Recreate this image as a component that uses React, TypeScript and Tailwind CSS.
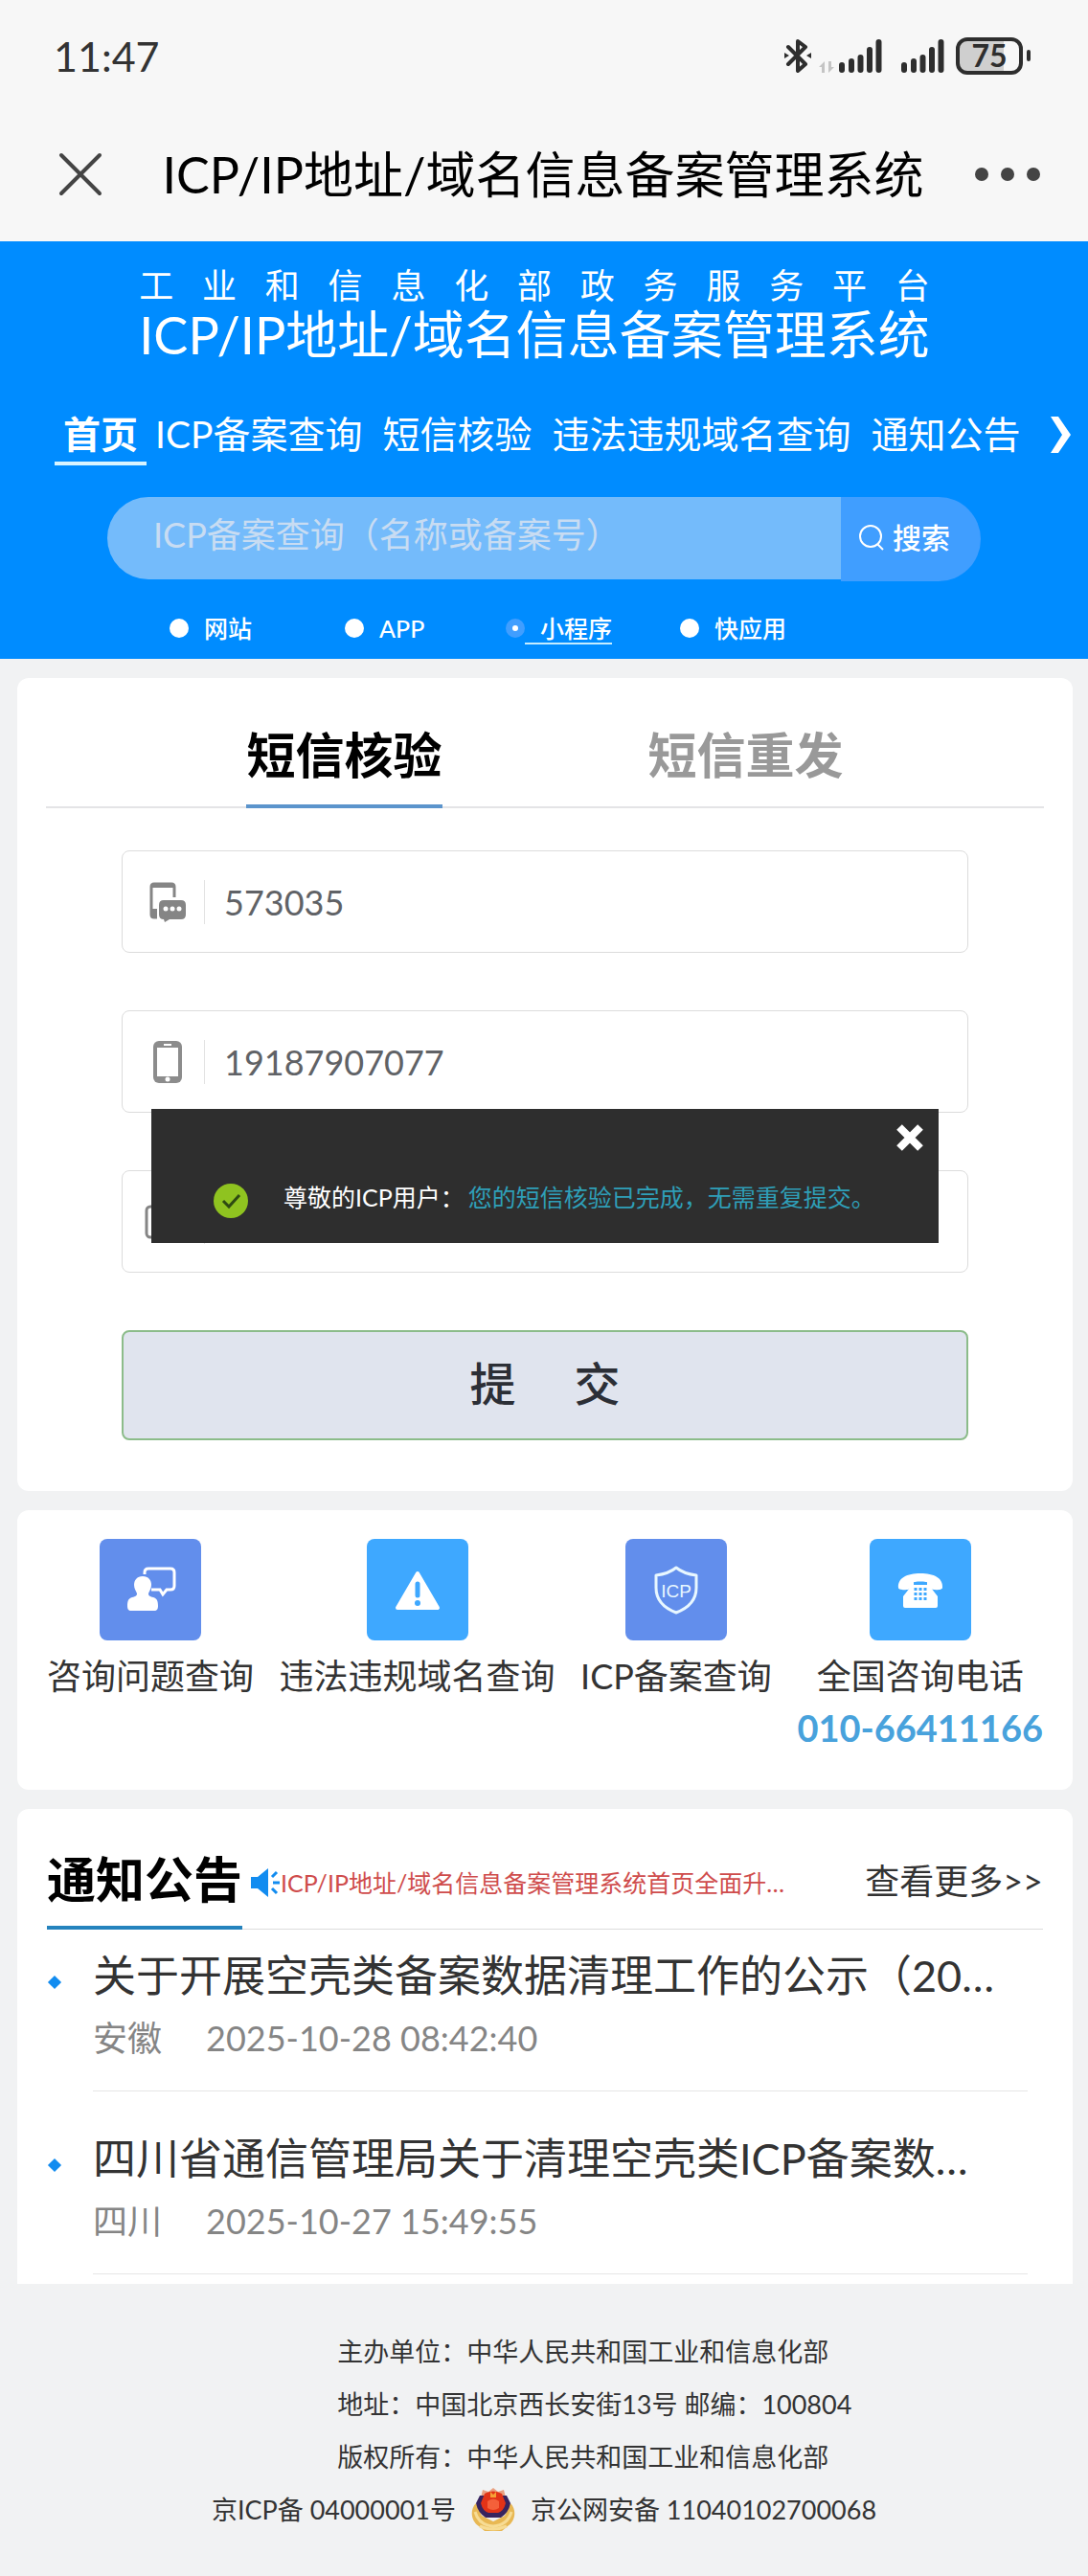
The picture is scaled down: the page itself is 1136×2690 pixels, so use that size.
import React from 'react';

const navItems = ['首页', 'ICP备案查询', '短信核验', '违法违规域名查询', '通知公告'];
const kinds = ['网站', 'APP', '小程序', '快应用'];
const notices = [
  { title: '关于开展空壳类备案数据清理工作的公示（20…', area: '安徽', time: '2025-10-28 08:42:40' },
  { title: '四川省通信管理局关于清理空壳类ICP备案数…', area: '四川', time: '2025-10-27 15:49:55' },
];

function Signal() {
  return (
    <svg viewBox="0 0 46 36" className="h-9 w-[46px]" stroke="#2e2e2e" strokeWidth="6" strokeLinecap="round">
      <path d="M4 28v5M14 24v9M23.500 20v13M33 12v21M42.500 4v29" />
    </svg>
  );
}

function StatusBar() {
  return (
    <div className="flex h-[116px] items-center justify-between pl-14 pr-[60px] text-[#333]">
      <span className="text-[43px] leading-none">11:47</span>
      <div className="flex items-center">
        <svg viewBox="0 0 28 36" className="h-9 w-7" fill="none" stroke="#2e2e2e" strokeWidth="4" strokeLinejoin="round" strokeLinecap="round">
          <path d="M4 9l18 18-8 7V3l8 6L4 27" />
          <path d="M0 15l5 3-5 3zM28 15l-5 3 5 3z" fill="#2e2e2e" stroke="none" />
        </svg>
        <svg viewBox="0 0 16 12" className="mt-6 ml-2 h-3 w-4" fill="#c4c4c4">
          <path d="M0 6l6-6v12H3V6zM16 6l-6 6V0h3v6z" />
        </svg>
        <span className="ml-1"><Signal /></span>
        <span className="ml-[19px]"><Signal /></span>
        <span className="ml-3 flex h-[39px] w-[70px] items-center justify-center rounded-xl border-4 border-[#2e2e2e] bg-linear-to-r from-[#cfcfcf] from-75% to-[#f7f7f7] to-75% text-[32px] leading-none font-bold text-[#2e2e2e]">75</span>
        <span className="ml-1 h-3 w-1 rounded-full bg-[#2e2e2e]" />
      </div>
    </div>
  );
}

function TitleBar() {
  return (
    <div className="flex h-[136px] items-center justify-between pr-[50px] pb-1 pl-[60px]">
      <button aria-label="关闭">
        <svg viewBox="0 0 48 48" className="size-12" stroke="#444" strokeWidth="4" strokeLinecap="round">
          <path d="M4 4l40 40M44 4L4 44" />
        </svg>
      </button>
      <span className="pl-2 text-[52px] leading-none whitespace-nowrap text-black">ICP/IP地址/域名信息备案管理系统</span>
      <button aria-label="更多" className="flex gap-[13px]">
        <span className="size-[14px] rounded-full bg-[#444]" />
        <span className="size-[14px] rounded-full bg-[#444]" />
        <span className="size-[14px] rounded-full bg-[#444]" />
      </button>
    </div>
  );
}

function Header() {
  return (
    <header className="bg-[#008cff] text-white">
      <div className="flex justify-center pt-6 pr-5">
        <div className="w-max">
          <p className="text-[36px] leading-[44px] [text-align-last:justify]">工业和信息化部政务服务平台</p>
          <h1 className="text-[54px] leading-[60px]">ICP/IP地址/域名信息备案管理系统</h1>
        </div>
      </div>
      <nav className="mt-[45px] flex h-[65px] items-start justify-between pr-4 pl-[57px] text-[39px] leading-[56px] whitespace-nowrap">
        <div className="flex gap-[21px]">
          {navItems.map((n, i) => (
            <a
              key={n}
              href="#"
              className={i === 0 ? '-mr-3 h-[61px] border-b-4 border-[#d8f4ff] px-[9px] font-bold' : ''}
            >
              {n}
            </a>
          ))}
        </div>
        <button aria-label="更多栏目" className="mt-[9px]">
          <svg viewBox="0 0 24 40" className="h-10 w-6" fill="white">
            <path d="M1 1h8l13 19L9 39H1l12-19z" />
          </svg>
        </button>
      </nav>
      <form className="mx-28 mt-[29px] flex" onSubmit={(e) => e.preventDefault()}>
        <input
          aria-label="ICP备案查询"
          placeholder="ICP备案查询（名称或备案号）"
          className="h-[86px] min-w-0 flex-1 rounded-l-full bg-[#74bbfb] pb-2 pl-12 text-[36px] placeholder:text-[#c8dcf2]"
        />
        <button className="flex h-[88px] w-[146px] items-center gap-2 rounded-r-full bg-[#409eff] pb-1 pl-[18px] text-[30px] font-medium">
          <svg viewBox="0 0 28 28" className="size-7" fill="none" stroke="white" strokeWidth="2">
            <circle cx="13" cy="13" r="11" />
            <path d="M20 21l6 6" />
          </svg>
          搜索
        </button>
      </form>
      <div className="mt-8 grid h-[49px] grid-cols-[183px_168px_182px_auto] pl-[177px] text-[25px] leading-[34px] font-medium">
        {kinds.map((k) => (
          <label key={k} className="flex h-[34px]">
            <input
              type="radio"
              name="kind"
              defaultChecked={k === '小程序'}
              className="mt-[7px] size-5 appearance-none rounded-full bg-white checked:border-[7px] checked:border-[#409eff]"
            />
            <span className={k === '小程序' ? 'border-b-2 border-[#c4ecff] pl-4' : 'pl-4'}>{k}</span>
          </label>
        ))}
      </div>
    </header>
  );
}

function CodeIcon() {
  return (
    <svg viewBox="0 0 38 42" className="h-[42px] w-[38px]" fill="none">
      <path d="M8 37H5q-3 0-3-3V5q0-3 3-3h18q3 0 3 3v11" stroke="#858585" strokeWidth="3" />
      <path d="M3 2h22v4H3zM2 28h6v10H4q-2 0-2-3z" fill="#858585" />
      <path d="M15 19h18q5 0 5 5v10q0 5-5 5H21l-5 3-1-3q-5 0-5-5V24q0-5 5-5z" fill="#858585" />
      <g fill="white"><circle cx="17" cy="28" r="2.500" /><circle cx="24" cy="28" r="2.500" /><circle cx="31" cy="28" r="2.500" /></g>
    </svg>
  );
}

function PhoneIcon() {
  return (
    <svg viewBox="0 0 32 46" className="h-[46px] w-8">
      <rect x="1" y="1" width="30" height="44" rx="6" fill="#8c8c8c" />
      <rect x="5" y="8" width="22" height="30" fill="white" />
      <path d="M12 5h8" stroke="white" strokeWidth="2" />
      <circle cx="16" cy="41" r="2.500" fill="white" />
    </svg>
  );
}

function CaptchaIcon() {
  return (
    <svg viewBox="0 0 40 36" className="h-9 w-10" fill="none" stroke="#858585" strokeWidth="3">
      <rect x="2" y="2" width="36" height="32" rx="4" />
    </svg>
  );
}

function Field({ label, value, icon }: { label: string; value: string; icon: React.ReactNode }) {
  return (
    <label className="flex h-[107px] items-center rounded-lg border border-[#dcdcdc] bg-white">
      <span className="flex h-[46px] w-[86px] items-center justify-center border-r border-[#e2e2e2] pl-2">{icon}</span>
      <input aria-label={label} defaultValue={value} className="min-w-0 flex-1 pl-5 text-[36px] text-[#606266] outline-none" />
    </label>
  );
}

function Dialog() {
  return (
    <div role="dialog" aria-label="提示" className="absolute top-[270px] right-[31px] left-[31px] h-[140px] bg-[#2e2e2e]">
      <button aria-label="关闭提示" className="absolute top-4 right-4">
        <svg viewBox="0 0 28 28" className="size-7" stroke="white" strokeWidth="8">
          <path d="M3 3l22 22M25 3L3 25" />
        </svg>
      </button>
      <div className="flex items-center pt-[70px] pl-[65px] text-[25px] leading-[36px] whitespace-nowrap">
        <svg viewBox="0 0 36 36" className="mt-2 mr-[37px] size-9">
          <circle cx="18" cy="18" r="18" fill="#8fc320" />
          <path d="M10 18l6 6 11-12" fill="none" stroke="#2e4a12" strokeWidth="3" />
        </svg>
        <span className="text-white">尊敬的ICP用户：</span>
        <span className="ml-1 text-[#2f9fb8]">您的短信核验已完成，无需重复提交。</span>
      </div>
    </div>
  );
}

function VerifyCard() {
  return (
    <section className="rounded-xl bg-white px-[30px] pt-[22px] pb-[53px]">
      <div className="flex h-[114px] justify-center gap-[215px] border-b-2 border-[#e4e4e6] text-[51px] font-bold">
        <button className="h-[114px] border-b-4 border-[#5b94cc] pt-2 text-black">短信核验</button>
        <button className="h-[114px] pt-1 text-[#999]">短信重发</button>
      </div>
      <div className="relative mx-[79px] mt-11 flex flex-col gap-[60px]">
        <Field label="验证码" value="573035" icon={<CodeIcon />} />
        <Field label="手机号" value="19187907077" icon={<PhoneIcon />} />
        <Field label="图形码" value="" icon={<span className="mr-2"><CaptchaIcon /></span>} />
        <Dialog />
        <button className="flex h-[115px] items-center justify-center gap-[61px] rounded-lg border-2 border-[#8cbc8a] bg-[#e0e4ee] pb-1 text-[48px] font-medium text-[#2c2f36]">
          <span>提</span>
          <span>交</span>
        </button>
      </div>
    </section>
  );
}

const AdviceIcon = (
  <svg viewBox="0 0 106 106" className="size-full">
    <path d="M47 37v-2q0-4 4-4h23q4 0 4 4v14q0 4-4 4h-4l-4 5-3-5h-9" fill="none" stroke="white" strokeWidth="3" />
    <path d="M45 39c6 0 9 4 9 9 0 4-2 6-3 9 0 3 2 3 5 4 4 1 5 4 5 9 0 3-1 5-4 5H33c-3 0-4-2-4-5 0-5 1-8 5-9 3-1 5-1 5-4-1-3-3-5-3-9 0-5 3-9 9-9z" fill="white" />
  </svg>
);
const WarnIcon = (
  <svg viewBox="0 0 106 106" className="size-full">
    <path d="M53 36l21 36H32z" fill="white" stroke="white" strokeWidth="4" strokeLinejoin="round" />
    <path d="M53 47v12" stroke="#3ea8ff" strokeWidth="5" strokeLinecap="round" />
    <circle cx="53" cy="67" r="3" fill="#3ea8ff" />
  </svg>
);
const ShieldIcon = (
  <svg viewBox="0 0 106 106" className="size-full">
    <path d="M53 30c6 5 13 7 21 8v13c0 12-8 21-21 26-13-5-21-14-21-26V38c8-1 15-3 21-8z" fill="none" stroke="#e8f7ff" strokeWidth="3" strokeLinejoin="round" />
    <text x="53" y="61" textAnchor="middle" fontSize="19" fill="#e8f7ff" fontFamily="Liberation Sans">ICP</text>
  </svg>
);
const CallIcon = (
  <svg viewBox="0 0 106 106" className="size-full">
    <path d="M30 51c-1-10 9-15 23-15s24 5 23 15c0 3-12 3-13 0v-5c-4-2-16-2-20 0v5c-1 3-13 3-13 0z" fill="white" />
    <path d="M46 44v4h14v-4h4v7l7 9v10q0 2-2 2H37q-2 0-2-2V60l7-9v-7z" fill="white" />
    <path d="M48 51v13M53 51v13M58 51v13" stroke="#3ea8ff" strokeWidth="3" strokeDasharray="3 2" />
  </svg>
);

const services = [
  { label: '咨询问题查询', color: 'bg-[#628eec]', icon: AdviceIcon },
  { label: '违法违规域名查询', color: 'bg-[#3ea8ff]', icon: WarnIcon },
  { label: 'ICP备案查询', color: 'bg-[#628eec]', icon: ShieldIcon },
  { label: '全国咨询电话', color: 'bg-[#3ea8ff]', icon: CallIcon, phone: '010-66411166' },
];

function Services() {
  return (
    <section className="flex justify-between rounded-xl bg-white px-[31px] pt-[30px] pb-9 whitespace-nowrap">
      {services.map((s) => (
        <a key={s.label} href="#" className="flex min-h-[226px] flex-col items-center text-[36px] text-[#333]">
          <span className={`size-[106px] rounded-lg ${s.color}`}>{s.icon}</span>
          <span className="mt-[10px] leading-[54px]">{s.label}</span>
          {s.phone && <span className="text-[38px] leading-[54px] font-bold text-[#48a2dc]">{s.phone}</span>}
        </a>
      ))}
    </section>
  );
}

function Notices() {
  return (
    <section className="rounded-t-xl bg-white px-[31px] pb-[10px]">
      <div className="flex h-[126px] items-stretch border-b border-[#dcdcdc] whitespace-nowrap">
        <h2 className="-mb-px shrink-0 border-b-4 border-[#2583bd] pt-[46px] text-[51px] leading-[56px] font-bold text-black">通知公告</h2>
        <div className="flex items-center pt-7">
          <svg viewBox="0 0 32 30" className="ml-2 h-[30px] w-8 shrink-0" fill="#128cf0">
            <path d="M1 9h7l11-9v30L8 21H1z" />
            <path d="M23 9l5-5M24 15h7M23 21l5 5" stroke="#128cf0" strokeWidth="3" />
          </svg>
          <a href="#" className="text-[25px] leading-9 text-[#cf4c4c]">ICP/IP地址/域名信息备案管理系统首页全面升…</a>
        </div>
        <a href="#" className="ml-auto pt-[50px] text-[36px] leading-[50px] text-[#333]">查看更多&gt;&gt;</a>
      </div>
      <ul>
        {notices.map((n) => (
          <li key={n.time} className="relative mr-4 ml-12 h-[191px] border-b border-[#e6e6e6] pt-[18px] first:h-[169px] not-first:pt-10">
            <span className="absolute mt-8 -ml-[45px] size-[10px] rotate-45 bg-[#128cf0]" />
            <a href="#" className="block text-[45px] leading-[60px] whitespace-nowrap text-[#333]">{n.title}</a>
            <p className="flex gap-[46px] pt-2 text-[36px] leading-[54px] text-[#858585]">
              <span>{n.area}</span>
              <time>{n.time}</time>
            </p>
          </li>
        ))}
      </ul>
    </section>
  );
}

function Emblem() {
  return (
    <svg viewBox="0 0 46 48" className="h-12 w-[46px]">
      <path d="M5 17C-2 24 0 36 8 41l6 5h18l6-5c8-5 10-17 3-24l-6 13-12 6-12-6z" fill="#e8b854" />
      <path d="M4 26q4 14 19 15 15-1 19-15M9 41q14 6 28 0" fill="none" stroke="#f7dc94" strokeWidth="3" />
      <path d="M12 3l6 2 5-4 5 4 6-2 2 8H10z" fill="#e9a080" />
      <path d="M9 9h28l4 8q-2 10-10 15H15Q7 27 5 17z" fill="#38245e" />
      <path d="M14 7q9-5 18 0l4 10q-2 8-8 10H18q-6-2-8-10z" fill="#e23317" />
      <path d="M17 15q6-5 12 0v7q-6 4-12 0z" fill="#f4603a" />
      <path d="M20 5l3 3 3-3v6h-6z" fill="#f7a036" />
    </svg>
  );
}

function Footer() {
  return (
    <footer className="pt-[43px] text-[27px] leading-[55px] whitespace-nowrap text-[#333]">
      <div className="pl-[31%]">
        <p>主办单位：中华人民共和国工业和信息化部</p>
        <p>地址：中国北京西长安街13号 邮编：100804</p>
        <p>版权所有：中华人民共和国工业和信息化部</p>
      </div>
      <p className="flex items-center justify-center gap-4 pb-11">
        <a href="#">京ICP备 04000001号</a>
        <Emblem />
        <a href="#">京公网安备 11040102700068</a>
      </p>
    </footer>
  );
}

export default function App() {
  return (
    <div className="overflow-hidden bg-[#f1f2f3] font-['Lato','Noto_Sans_CJK_SC',sans-serif]">
      <div className="bg-[#f7f7f7]">
        <StatusBar />
        <TitleBar />
      </div>
      <Header />
      <main className="flex flex-col gap-5 pt-5 pr-4 pl-[18px]">
        <VerifyCard />
        <Services />
        <Notices />
      </main>
      <Footer />
    </div>
  );
}
